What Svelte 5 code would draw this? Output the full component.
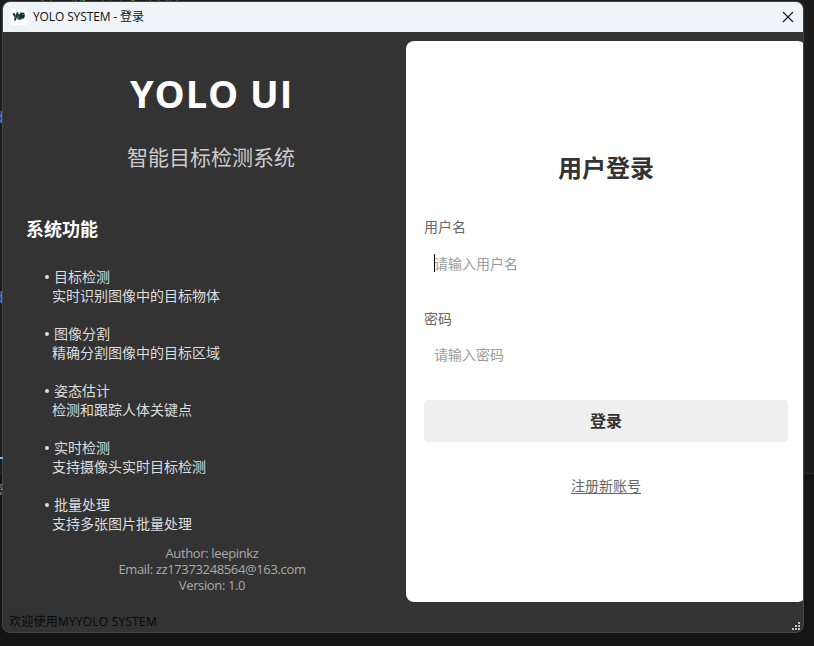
<script>
  const features = [
    ['目标检测', '实时识别图像中的目标物体'],
    ['图像分割', '精确分割图像中的目标区域'],
    ['姿态估计', '检测和跟踪人体关键点'],
    ['实时检测', '支持摄像头实时目标检测'],
    ['批量处理', '支持多张图片批量处理']
  ];
  const grip = [[6, 0], [3, 3], [6, 3], [0, 6], [3, 6], [6, 6]];
</script>

<div class="desktop">
  <div class="code-line">算 测试目录及权重</div>
  <span class="glyph" style="top:109px">d</span>
  <span class="glyph" style="top:289px">d</span>
  <span class="dash"></span>
  <span class="glyph tab">帮</span>
  <div class="lower"></div>

  <div class="window">
    <header class="titlebar">
      <svg class="logo" width="16" height="16" viewBox="0 0 16 16">
        <rect width="16" height="16" fill="#fff" />
        <path d="M2.3 4.2l2.2 3.8M6.8 3.4L4.9 8l-1 3.6" fill="none" stroke="#17383c" stroke-width="2" />
        <ellipse cx="8" cy="7.8" rx="2" ry="2.9" fill="#123f45" />
        <path d="M9.8 3.6v7.2" stroke="#0b2227" stroke-width="1.4" />
        <ellipse cx="11.7" cy="6.6" rx="2.1" ry="3.1" fill="#102e32" />
        <path d="M4 7h1M7 8h1.5M11.5 5.5h1" stroke="#55a6a2" />
      </svg>
      <span class="title">YOLO SYSTEM - 登录</span>
      <svg class="close" width="12" height="12" viewBox="0 0 12 12">
        <path d="M1 1l10 10M11 1L1 11" stroke="#16181a" stroke-width="1.1" />
      </svg>
    </header>

    <main>
      <section class="intro">
        <h1>YOLO UI</h1>
        <p class="subtitle">智能目标检测系统</p>
        <h2>系统功能</h2>
        <ul>
          {#each features as [name, detail]}
            <li>
              <div class="name"><i></i>{name}</div>
              <div class="detail">{detail}</div>
            </li>
          {/each}
        </ul>
        <div class="about">
          <div>Author: leepinkz</div>
          <div>Email: zz17373248564@163.com</div>
          <div>Version: 1.0</div>
        </div>
      </section>

      <section class="login">
        <h3>用户登录</h3>
        <div class="label">用户名</div>
        <div class="field"><span class="caret"></span>请输入用户名</div>
        <div class="label second">密码</div>
        <div class="field">请输入密码</div>
        <button>登录</button>
        <a href="#register">注册新账号</a>
      </section>
    </main>

    <footer>
      <span>欢迎使用MYYOLO SYSTEM</span>
      <svg width="8" height="8" viewBox="0 0 8 8">
        {#each grip as [x, y]}
          <rect {x} {y} width="2" height="2" fill="#c4c4c4" />
        {/each}
      </svg>
    </footer>
  </div>
</div>

<style>
  * { box-sizing: border-box; }
  .desktop {
    position: relative;
    width: 814px;
    height: 646px;
    padding: 1px 0 0 2px;
    overflow: hidden;
    background: #1c1c1c;
    font-family: "Open Sans", "Noto Sans CJK SC", sans-serif;
  }
  .code-line {
    position: absolute;
    left: 40px;
    top: -14px;
    font: 16px/18px "Liberation Mono", "Noto Sans CJK SC", monospace;
    color: #4a8a3c;
    letter-spacing: 2.5px;
  }
  .glyph {
    position: absolute;
    left: -6px;
    font: 16px/20px "Liberation Mono", "Noto Sans CJK SC", monospace;
    color: #4583bd;
  }
  .glyph.tab {
    top: 482px;
    left: -9px;
    font-size: 12px;
    color: #8a8583;
    z-index: 1;
  }
  .dash {
    position: absolute;
    left: 0;
    top: 457px;
    width: 3px;
    height: 2px;
    background: #79b8d8;
    z-index: 1;
  }
  .lower {
    position: absolute;
    left: 0;
    right: 0;
    top: 473px;
    bottom: 0;
    border-top: 1px solid #292929;
    background: #141414;
  }
  .window {
    position: relative;
    display: flex;
    flex-direction: column;
    width: 802px;
    height: 632px;
    border: 1px solid #454545;
    border-radius: 8px;
    overflow: hidden;
    background: #333;
  }
  .titlebar {
    display: flex;
    align-items: center;
    flex: 0 0 30px;
    padding: 0 9px 0 8px;
    background: #eff4f9;
  }
  .title {
    flex: 1;
    margin-left: 6px;
    font-size: 12px;
    line-height: 16px;
    letter-spacing: -0.12px;
    color: #111;
  }
  main {
    display: flex;
    flex: 0 0 579px;
    padding-top: 9px;
  }
  .intro {
    display: flex;
    flex-direction: column;
    flex: 0 0 403px;
    padding-left: 23px;
  }
  h1, h2, h3, p, ul { margin: 0; padding: 0; font-weight: normal; }
  h1 {
    margin: 25px 0 0 104px;
    font-size: 38px;
    line-height: 54px;
    font-weight: 700;
    letter-spacing: 0.9px;
    color: #fff;
    white-space: nowrap;
  }
  .subtitle {
    margin: 20px 0 0 101px;
    font-size: 21px;
    line-height: 34px;
    color: #ccc;
  }
  h2 {
    margin-top: 41px;
    font-size: 18px;
    line-height: 28px;
    font-weight: 700;
    color: #fff;
  }
  ul {
    display: flex;
    flex-direction: column;
    gap: 19px;
    margin: 24px 0 0 19px;
    list-style: none;
    font-size: 14px;
    line-height: 19px;
    color: #ddd;
  }
  .name { display: flex; align-items: center; }
  .name i {
    width: 4px;
    height: 4px;
    margin-right: 5px;
    border-radius: 50%;
    background: #ddd;
  }
  .detail { padding-left: 7px; }
  .about {
    margin: 12px 0 0 -5px;
    padding-right: 3px;
    text-align: center;
    font-size: 13px;
    line-height: 16px;
    letter-spacing: -0.36px;
    color: #aaa;
  }
  .login {
    display: flex;
    flex-direction: column;
    flex: 0 0 400px;
    height: 561px;
    padding: 109px 18px 0 18px;
    border-radius: 8px;
    background: #fff;
  }
  h3 {
    font-size: 24px;
    line-height: 36px;
    font-weight: 700;
    text-align: center;
    color: #333;
  }
  .label {
    margin-top: 31px;
    font-size: 14px;
    line-height: 20px;
    color: #666;
  }
  .label.second { margin-top: 25px; }
  .field {
    position: relative;
    height: 40px;
    margin-top: 7px;
    padding-left: 10px;
    font-size: 14px;
    line-height: 40px;
    color: #9b9b9b;
  }
  .label.second + .field { margin-top: 6px; }
  .caret {
    position: absolute;
    left: 10px;
    top: 10px;
    width: 1px;
    height: 18px;
    background: #000;
  }
  button {
    height: 42px;
    margin-top: 25px;
    padding: 0 0 2px;
    border: 0;
    border-radius: 4px;
    background: #efefef;
    font: 700 16px/24px "Noto Sans CJK SC", sans-serif;
    color: #333;
  }
  a {
    align-self: center;
    margin-top: 34px;
    font-size: 14px;
    line-height: 20px;
    color: #666;
    text-decoration: underline;
    text-underline-offset: 2px;
  }
  footer {
    display: flex;
    flex: 1;
    align-items: flex-start;
    justify-content: space-between;
    padding: 3px 3px 0 6px;
    font-size: 12px;
    line-height: 16px;
    letter-spacing: 0.22px;
    color: #080808;
  }
  footer svg { margin-top: 8px; }
</style>
